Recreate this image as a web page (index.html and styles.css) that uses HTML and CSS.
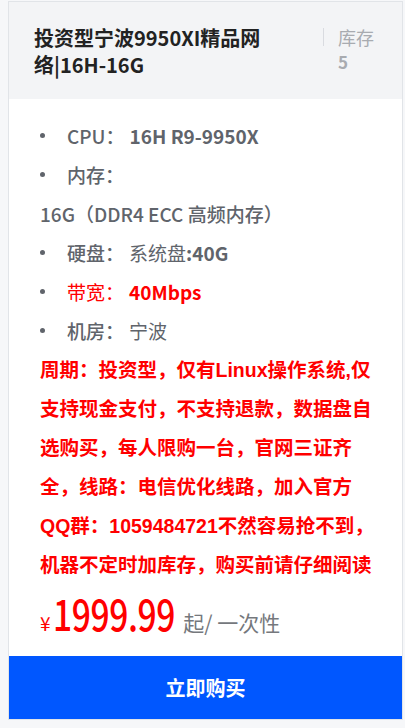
FILE: index.html
```html
<!DOCTYPE html>
<html lang="zh-CN">
<head>
<meta charset="utf-8">
<title>投资型宁波9950XI精品网络</title>
<link rel="stylesheet" href="styles.css">
</head>
<body>
<div class="card">
  <div class="head">
    <div class="title">投资型宁波9950XI精品网络|16H-16G</div>
    <div class="stock">
      <div class="sep"></div>
      <div class="stock-text">
        <div class="stock-label">库存</div>
        <div class="stock-num">5</div>
      </div>
    </div>
  </div>
  <div class="body">
    <div class="row dot"><span class="lab">CPU：</span><b class="val">16H R9-9950X</b></div>
    <div class="row dot"><span class="lab">内存：</span></div>
    <div class="row"><span class="lab">16G（DDR4 ECC 高频内存）</span></div>
    <div class="row dot"><span class="lab">硬盘：</span><span class="reg val">系统盘</span><b>:40G</b></div>
    <div class="row dot red"><span class="lab">带宽：</span><b class="val">40Mbps</b></div>
    <div class="row dot"><span class="lab">机房：</span><span class="reg val">宁波</span></div>
    <p class="notice">周期：投资型，仅有Linux操作系统,仅支持现金支付，不支持退款，数据盘自选购买，每人限购一台，官网三证齐全，线路：电信优化线路，加入官方QQ群：1059484721不然容易抢不到，机器不定时加库存，购买前请仔细阅读</p>
    <div class="price">
      <span class="yen">¥</span><span class="amount">1999.99</span><span class="unit">起/ 一次性</span>
    </div>
  </div>
  <div class="buy">立即购买</div>
</div>
</body>
</html>
```
FILE: styles.css
```css
html, body {
  margin: 0;
  padding: 0;
  background: #f6f7f9;
  font-family: "Noto Sans CJK SC", "Noto Sans", sans-serif;
}
.card {
  box-sizing: border-box;
  width: 395px;
  margin: 1px 0 0 8px;
  background: #fff;
  border: 1px solid #e1e4e8;
}
.head {
  display: flex;
  align-items: flex-start;
  background: #f3f4f6;
  padding: 22px 28px 21px 25px;
  height: 97px;
  box-sizing: border-box;
}
.title {
  width: 242px;
  font-size: 20px;
  line-height: 27px;
  font-weight: 600;
  color: #222;
}
.stock {
  margin-left: auto;
  display: flex;
  align-items: flex-start;
}
.sep {
  width: 1px;
  height: 18px;
  background: #d9dbe0;
  margin-top: 4px;
  margin-right: 14px;
}
.stock-label {
  font-size: 18px;
  line-height: 27px;
  color: #a8abb0;
}
.stock-num {
  font-size: 17px;
  line-height: 22px;
  font-weight: 600;
  color: #a8abb0;
}
.body {
  padding: 16.5px 28px 19.5px 31px;
}
.row {
  display: flex;
  align-items: center;
  font-size: 19px;
  line-height: 39px;
  color: #60646b;
  font-weight: 500;
}
.row b {
  font-weight: 700;
}
.row .reg {
  font-weight: 400;
}
.row .val {
  margin-left: 5px;
}
.dot::before {
  content: "";
  width: 5px;
  height: 5px;
  border-radius: 50%;
  background: #60646b;
  margin: 0 22px 0 0;
  flex: none;
}
.row.red {
  color: #f00;
}
.row.red .lab {
  font-weight: 400;
}
.notice {
  margin: 1px 0 0 0;
  font-family: "Liberation Sans", "Noto Sans CJK SC", sans-serif;
  font-size: 19.5px;
  line-height: 39px;
  font-weight: 700;
  color: #f00;
}
.price {
  margin-top: 6px;
  height: 44px;
  display: flex;
  align-items: baseline;
  line-height: 44px;
}
.yen {
  font-size: 19px;
  color: #f00;
  margin-right: 2px;
}
.amount {
  display: inline-block;
  font-size: 42px;
  letter-spacing: -0.5px;
  color: #f00;
  font-weight: 500;
  transform: scaleX(0.8);
  transform-origin: left center;
  margin-right: -22px;
}
.unit {
  font-size: 21px;
  color: #75787d;
}
.buy {
  height: 63px;
  margin-top: 2px;
  background: #0057ff;
  color: #fff;
  font-size: 20px;
  font-weight: 700;
  display: flex;
  align-items: center;
  justify-content: center;
}
```
